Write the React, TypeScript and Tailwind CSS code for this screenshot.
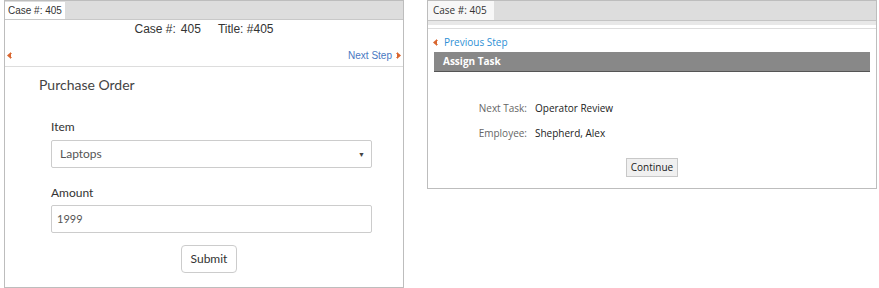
import React from "react";

function ArrowLeft() {
    return (
        <svg width="5" height="7" viewBox="0 0 5 7" className="shrink-0">
            <path d="M4 0 L4 7 L0 3.5 Z" fill="#d9662f"/>
            <rect x="4" y="1" width="1" height="1" fill="#e9a07a"/>
            <rect x="4" y="5" width="1" height="1" fill="#e9a07a"/>
        </svg>
    )
}

function ArrowRight() {
    return (
        <svg width="5" height="7" viewBox="0 0 5 7" className="shrink-0">
            <path d="M1 0 L1 7 L5 3.5 Z" fill="#d9662f"/>
            <rect x="0" y="1" width="1" height="1" fill="#e9a07a"/>
            <rect x="0" y="5" width="1" height="1" fill="#e9a07a"/>
        </svg>
    )
}

function PurchasePanel() {
    return (
        <div className="ml-[4px] w-[400px] h-[288px] border border-[#bdbdbd] flex flex-col">
            <div className="h-[19px] bg-[#dddddd] border-b border-[#c8c8c8] flex items-end">
                <span className="h-[17px] px-[3px] bg-white text-[10px] leading-[17px] text-[#333] font-['Liberation_Sans',sans-serif]">Case #: 405</span>
            </div>
            <div className="text-center text-[12px] leading-[16px] mt-[1px] text-[#333] font-['Liberation_Sans',sans-serif]">
                <span>Case #:</span>
                <span className="ml-[5px]">405</span>
                <span className="ml-[17px]">Title: #405</span>
            </div>
            <div className="flex items-center justify-between h-[14px] mt-[11px] px-[2px] font-['Liberation_Sans',sans-serif] text-[10px]">
                <ArrowLeft/>
                <span className="flex items-center gap-[4px] text-[#4a78c2]">Next Step <ArrowRight/></span>
            </div>
            <div className="mt-[4px] border-t border-[#dddddd]"/>
            <div className="pl-[34px] pr-[31px] font-['Lato',sans-serif]">
                <div className="mt-[9px] text-[14px] leading-[18px] text-[#444]">Purchase Order</div>
                <div className="pl-[12px]">
                    <div className="mt-[26px] text-[12px] leading-[14px] text-[#333]">Item</div>
                    <div className="mt-[6px] h-[28px] border border-[#cccccc] rounded-[2px] flex items-center justify-between pl-[8px] pr-[6px] text-[12px] text-[#555]">
                        <span>Laptops</span>
                        <span className="text-[7px] text-[#444]">▼</span>
                    </div>
                    <div className="mt-[18px] text-[12px] leading-[14px] text-[#333]">Amount</div>
                    <div className="mt-[5px] h-[28px] border border-[#cccccc] rounded-[2px] flex items-center pl-[5px] text-[11px] text-[#555]">1999</div>
                    <div className="mt-[12px] flex justify-center pr-[5px]">
                        <button className="w-[56px] h-[28px] border border-[#cccccc] rounded-[4px] bg-white text-[12px] text-[#333]">Submit</button>
                    </div>
                </div>
            </div>
        </div>
    )
}

function AssignPanel() {
    return (
        <div className="ml-[23px] w-[450px] h-[189px] border border-[#bdbdbd] flex flex-col font-['Open_Sans',sans-serif]">
            <div className="h-[20px] bg-[#dddddd] border-b border-[#c4c4c4] flex items-end">
                <span className="h-[19px] w-[66px] pl-[5px] bg-[#f7f7f7] text-[10px] leading-[19px] text-[#333]">Case #: 405</span>
            </div>
            <div className="h-[4px] bg-[#e8e8e8]"/>
            <div className="mt-[3px] border-t border-[#dddddd]"/>
            <div className="flex items-center gap-[6px] pl-[5px] mt-[6px] h-[14px] text-[10px] text-[#2d8fd5]">
                <ArrowLeft/>
                <span>Previous Step</span>
            </div>
            <div className="mx-[6px] mt-[3px] h-[20px] bg-[#888888] border-b border-[#555] text-white text-[10px] font-bold leading-[19px] pl-[9px]">Assign Task</div>
            <div className="mt-[29px] grid grid-cols-[99px_1fr] gap-x-[8px] gap-y-[11px] text-[10px] leading-[14px]">
                <span className="text-right text-[#666]">Next Task:</span>
                <span className="text-[#222]">Operator Review</span>
                <span className="text-right text-[#666]">Employee:</span>
                <span className="text-[#222]">Shepherd, Alex</span>
            </div>
            <div className="mt-[18px] flex justify-center">
                <button className="h-[19px] px-[4px] border border-[#c8c8c8] bg-[#f0f0f0] text-[10px] leading-[17px] text-[#222]">Continue</button>
            </div>
        </div>
    )
}

export default function App() {
    return (
        <div className="w-[879px] h-[288px] bg-white flex items-start">
            <PurchasePanel/>
            <AssignPanel/>
        </div>
    )
}
